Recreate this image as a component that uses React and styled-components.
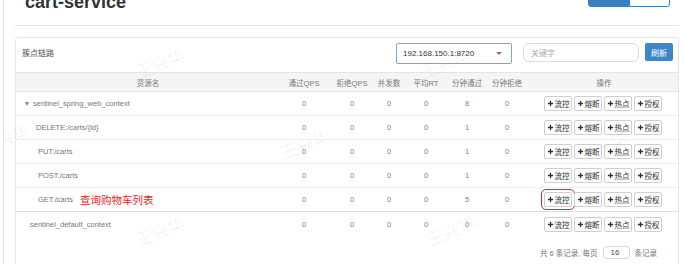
import React from 'react';
import styled, { createGlobalStyle } from 'styled-components';
import { Plus } from 'lucide-react';

const GlobalStyle = createGlobalStyle`
  html, body {
    margin: 0;
    padding: 0;
    background: #fff;
  }
  body {
    font-family: "Liberation Sans", Arial, "Noto Sans CJK SC", sans-serif;
    color: #666;
  }
`;

const Page = styled.div`
  position: relative;
  height: 264px;
  overflow: hidden;
  margin-left: 3px;
  border-left: 1px solid #e2e2e2;
  padding: 0 5px 0 11px;
`;

const PageHeader = styled.div`
  display: flex;
  justify-content: space-between;
  align-items: flex-start;
  height: 25px;
  border-bottom: 1px solid #e6e6e6;
`;

const Title = styled.h1`
  margin: -7px 0 0 10px;
  font-size: 18px;
  line-height: 18px;
  font-weight: bold;
  color: #333;
`;

const ViewGroup = styled.div`
  display: flex;
  margin: -13px 9px 0 0;
`;

const ViewButton = styled.div`
  width: 41px;
  height: 20px;
  box-sizing: border-box;
  display: flex;
  align-items: flex-end;
  justify-content: center;
  padding-bottom: 6px;
  font-size: 8px;
  line-height: 8px;
  border: 1px solid #3a7fc1;
  background: ${p => (p.$active ? '#3a7fc1' : '#fff')};
  color: ${p => (p.$active ? '#fff' : '#3a7fc1')};
  border-radius: ${p => (p.$active ? '0 0 0 3px' : '0 0 3px 0')};
`;

const Panel = styled.div`
  margin-top: 11px;
  border: 1px solid #e6e6e6;
  border-radius: 3px;
  height: 260px;
`;

const PanelHeading = styled.div`
  display: flex;
  align-items: flex-start;
  height: 34px;
  box-sizing: border-box;
  padding: 5px 5px 0 6px;
`;

const HeadingLabel = styled.span`
  margin-top: 4px;
  font-size: 8px;
  color: #555;
`;

const SelectBox = styled.div`
  margin-left: auto;
  width: 116px;
  height: 21px;
  box-sizing: border-box;
  border: 1px solid #7ea6d2;
  border-radius: 2px;
  display: flex;
  align-items: center;
  justify-content: space-between;
  padding: 0 9px 0 6px;
  font-size: 8px;
  color: #333;
`;

const Caret = styled.span`
  width: 0;
  height: 0;
  border-left: 3px solid transparent;
  border-right: 3px solid transparent;
  border-top: 3px solid #777;
`;

const SearchInput = styled.div`
  margin-left: 11px;
  width: 116px;
  height: 19px;
  box-sizing: border-box;
  border: 1px solid #dcdcdc;
  border-radius: 6px;
  display: flex;
  align-items: center;
  padding-left: 7px;
  font-size: 8px;
  color: #aaa;
`;

const RefreshButton = styled.div`
  margin-left: 6px;
  width: 28px;
  height: 18px;
  border-radius: 2px;
  background: #3d87c8;
  color: #fff;
  font-size: 8px;
  display: flex;
  align-items: center;
  justify-content: center;
`;

const cols = '264px 48px 48px 26px 48px 34px 46px 1fr';

const HeadRow = styled.div`
  display: grid;
  grid-template-columns: ${cols};
  height: 20px;
  box-sizing: border-box;
  align-items: center;
  background: #f5f5f5;
  border-top: 1px solid #e4e4e4;
  border-bottom: 1px solid #e4e4e4;
  font-size: 7.5px;
  color: #777;
  text-align: center;
  white-space: nowrap;
`;

const Row = styled.div`
  display: grid;
  grid-template-columns: ${cols};
  height: 24px;
  box-sizing: border-box;
  align-items: center;
  border-bottom: ${p => (p.$last ? 'none' : `1px solid ${p.$strong ? '#dedede' : '#efefef'}`)};
  font-size: 7.5px;
  color: #808080;
  text-align: center;
`;

const NameCell = styled.div`
  text-align: left;
  padding-left: ${p => p.$indent}px;
  display: flex;
  align-items: center;
  white-space: nowrap;
  color: #777;
`;

const Arrow = styled.span`
  width: 0;
  height: 0;
  margin-right: 4px;
  border-left: 2.5px solid transparent;
  border-right: 2.5px solid transparent;
  border-top: 4px solid #888;
`;

const Note = styled.span`
  margin-left: 7px;
  font-size: 10.5px;
  color: #e6261f;
  font-family: "Noto Sans CJK SC", sans-serif;
`;

const Actions = styled.div`
  display: flex;
  justify-content: center;
  gap: 2px;
  padding-right: 2px;
`;

const ActionButton = styled.div`
  width: 28px;
  height: 15px;
  box-sizing: border-box;
  border: 1px solid #cfcfcf;
  border-radius: 2px;
  background: #fff;
  display: flex;
  align-items: center;
  justify-content: center;
  gap: 1px;
  font-size: 7.5px;
  color: #333;
  outline: ${p => (p.$marked ? '1px solid #e0282a' : 'none')};
  outline-offset: 2px;
`;

const Pager = styled.div`
  display: flex;
  justify-content: flex-end;
  align-items: center;
  gap: 5px;
  margin-top: 10px;
  padding-right: 21px;
  font-size: 7.5px;
  color: #777;
`;

const PageSize = styled.div`
  width: 27px;
  height: 13px;
  box-sizing: border-box;
  border: 1px solid #d6d6d6;
  border-radius: 4px;
  display: flex;
  align-items: center;
  padding-left: 7px;
  font-size: 8px;
  color: #444;
`;

const Watermark = styled.span`
  position: absolute;
  left: ${p => p.$x}px;
  top: ${p => p.$y}px;
  transform: rotate(-22deg);
  font-family: "Noto Sans CJK SC", sans-serif;
  font-size: 17px;
  color: rgba(0, 0, 0, 0.06);
  pointer-events: none;
  white-space: nowrap;
`;

const resources = [
  { name: 'sentinel_spring_web_context', indent: 9, arrow: true, v: [0, 0, 0, 0, 8, 0] },
  { name: 'DELETE:/carts/{id}', indent: 20, v: [0, 0, 0, 0, 1, 0] },
  { name: 'PUT:/carts', indent: 22, v: [0, 0, 0, 0, 1, 0] },
  { name: 'POST:/carts', indent: 22, v: [0, 0, 0, 0, 1, 0] },
  { name: 'GET:/carts', indent: 22, note: '查询购物车列表', marked: true, strong: true, v: [0, 0, 0, 0, 5, 0] },
  { name: 'sentinel_default_context', indent: 14, last: true, v: [0, 0, 0, 0, 0, 0] },
];

const actions = ['流控', '熔断', '热点', '授权'];

const marks = [
  [130, 50], [415, 50], [-25, 126], [275, 131], [573, 133], [130, 218], [421, 218],
];

export default function App() {
  return (
    <>
      <GlobalStyle />
      <Page>
        <PageHeader>
          <Title>cart-service</Title>
          <ViewGroup>
            <ViewButton $active>树状视图</ViewButton>
            <ViewButton>列表视图</ViewButton>
          </ViewGroup>
        </PageHeader>
        <Panel>
          <PanelHeading>
            <HeadingLabel>簇点链路</HeadingLabel>
            <SelectBox>
              192.168.150.1:8720
              <Caret />
            </SelectBox>
            <SearchInput>关键字</SearchInput>
            <RefreshButton>刷新</RefreshButton>
          </PanelHeading>
          <HeadRow>
            <div>资源名</div>
            <div>通过QPS</div>
            <div>拒绝QPS</div>
            <div>并发数</div>
            <div>平均RT</div>
            <div>分钟通过</div>
            <div>分钟拒绝</div>
            <div>操作</div>
          </HeadRow>
          {resources.map(r => (
            <Row key={r.name} $strong={r.strong} $last={r.last}>
              <NameCell $indent={r.indent}>
                {r.arrow && <Arrow />}
                {r.name}
                {r.note && <Note>{r.note}</Note>}
              </NameCell>
              {r.v.map((n, i) => (
                <div key={i}>{n}</div>
              ))}
              <Actions>
                {actions.map((a, i) => (
                  <ActionButton key={a} $marked={r.marked && i === 0}>
                    <Plus size={7} strokeWidth={4.5} />
                    {a}
                  </ActionButton>
                ))}
              </Actions>
            </Row>
          ))}
          <Pager>
            <span>共 6 条记录, 每页</span>
            <PageSize>16</PageSize>
            <span>条记录</span>
          </Pager>
        </Panel>
        {marks.map(([x, y], i) => (
          <Watermark key={i} $x={x} $y={y}>王兴华</Watermark>
        ))}
      </Page>
    </>
  );
}
